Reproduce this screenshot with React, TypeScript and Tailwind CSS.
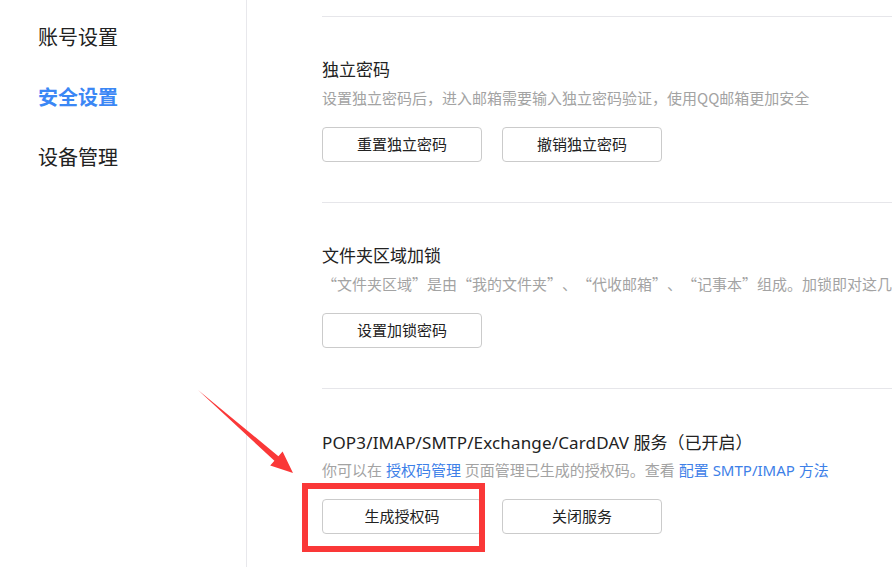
import React from "react";

const navItems = [
  { label: "账号设置", active: false },
  { label: "安全设置", active: true },
  { label: "设备管理", active: false },
];

const cjk = '"Noto Sans CJK SC", "Noto Sans", sans-serif';

function OutlineButton({ children }: { children: React.ReactNode }) {
  return (
    <button className="w-[160px] h-[35px] shrink-0 rounded-[4px] border border-[#cbcbcb] bg-white text-[15px] text-[#222] flex items-center justify-center">
      {children}
    </button>
  );
}

function Section({
  title,
  desc,
  buttons,
}: {
  title: React.ReactNode;
  desc: React.ReactNode;
  buttons: string[];
}) {
  return (
    <div className="border-t border-[#e6e6ea] pt-[41px] pb-[40px]">
      <div className="h-[24px] leading-[24px] text-[17px] text-[#222] whitespace-nowrap">{title}</div>
      <div className="mt-[5px] h-[22px] leading-[22px] text-[15px] text-[#a3a3a3] whitespace-nowrap">{desc}</div>
      <div className="mt-[18px] flex gap-[20px]">
        {buttons.map((b) => (
          <OutlineButton key={b}>{b}</OutlineButton>
        ))}
      </div>
    </div>
  );
}

export default function App() {
  return (
    <div
      lang="zh-CN"
      className="relative w-[892px] h-[567px] overflow-hidden bg-white flex [text-spacing-trim:space-all]"
      style={{ fontFamily: '"Noto Sans", "Noto Sans CJK SC", sans-serif' }}
    >
      {/* Sidebar */}
      <div className="w-[247px] shrink-0 border-r border-[#e8e8ec] pt-[8px] pl-[38px]">
        {navItems.map((item) => (
          <div
            key={item.label}
            className={`h-[60px] flex items-center text-[20px] ${
              item.active ? "text-[#3b87f5] font-bold" : "text-[#222]"
            }`}
          >
            {item.label}
          </div>
        ))}
      </div>

      {/* Main */}
      <div className="flex-1 min-w-0 pl-[75px] pt-[16px] overflow-hidden">
        <Section
          title="独立密码"
          desc={
            <span style={{ fontFamily: cjk }}>
              设置独立密码后，进入邮箱需要输入独立密码验证，使用QQ邮箱更加安全
            </span>
          }
          buttons={["重置独立密码", "撤销独立密码"]}
        />
        <Section
          title="文件夹区域加锁"
          desc={
            <span className="[font-feature-settings:'fwid']" style={{ fontFamily: cjk }}>
              “文件夹区域”是由“我的文件夹”、“代收邮箱”、“记事本”组成。加锁即对这几个文件夹进行保护
            </span>
          }
          buttons={["设置加锁密码"]}
        />
        <Section
          title={
            <>
              <span className="tracking-[0.15px]">POP3/IMAP/SMTP/Exchange/CardDAV</span>{" "}
              <span style={{ fontFamily: cjk }}>服务（已开启）</span>
            </>
          }
          desc={
            <>
              你可以在 <span className="text-[#3d80e8]">授权码管理</span> 页面管理已生成的授权码。查看{" "}
              <span className="text-[#3d80e8]">配置 SMTP/IMAP 方法</span>
            </>
          }
          buttons={["生成授权码", "关闭服务"]}
        />
      </div>

      {/* Annotation overlay: red box */}
      <div className="absolute left-[302px] top-[483px] w-[183px] h-[69px] border-[6px] border-[#fa3838] pointer-events-none" />

      {/* Annotation overlay: arrow */}
      <svg className="absolute left-0 top-0 pointer-events-none" width="892" height="567" viewBox="0 0 892 567">
        <polygon
          points="198,390 278.4,456.2 282.6,451.4 293,473 270.2,465.6 274.4,460.8"
          fill="#fa3838"
        />
      </svg>
    </div>
  );
}
